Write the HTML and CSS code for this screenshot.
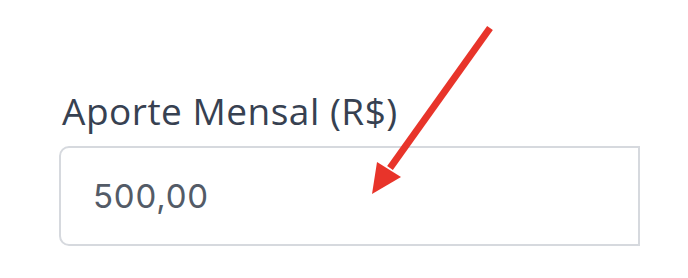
FILE: index.html
```html
<!DOCTYPE html>
<html lang="en">
<head>
  <meta charset="UTF-8">
  <meta name="viewport" content="width=device-width, initial-scale=1">
  <title>Aporte Mensal</title>
  <link rel="stylesheet" href="styles.css">
</head>
<body>
  <div class="field">
    <label class="field-label" for="aporte">Aporte Mensal (R$)</label>
    <div class="field-input" id="aporte">500,00</div>
  </div>

  <!-- annotation arrow -->
  <svg class="arrow" width="688" height="278" viewBox="0 0 688 278">
    <line x1="490" y1="28" x2="390" y2="168" stroke="#e8342a" stroke-width="7"/>
    <polygon points="372,194 377,162 401,177" fill="#e8342a"/>
  </svg>
</body>
</html>
```

FILE: styles.css
```css
* {
  box-sizing: border-box;
}
body {
  margin: 0;
  padding: 0;
  background: #fff;
  width: 688px;
  height: 278px;
  overflow: hidden;
  position: relative;
}
.field {
  display: flex;
  flex-direction: column;
  padding: 86px 0 0 59px;
}
.field-label {
  font-family: "Open Sans", sans-serif;
  font-weight: 500;
  font-size: 37px;
  line-height: 50px;
  letter-spacing: 0.5px;
  color: #374151;
  padding-left: 3px;
  margin-bottom: 10px;
}
.field-input {
  width: 581px;
  height: 100px;
  border: 2px solid #d6d9de;
  border-radius: 10px 0 0 10px;
  padding-left: 32px;
  display: flex;
  align-items: center;
  font-family: Inter, sans-serif;
  font-size: 33px;
  letter-spacing: 0.8px;
  color: #535b67;
}
.arrow {
  position: absolute;
  top: 0;
  left: 0;
}
```
